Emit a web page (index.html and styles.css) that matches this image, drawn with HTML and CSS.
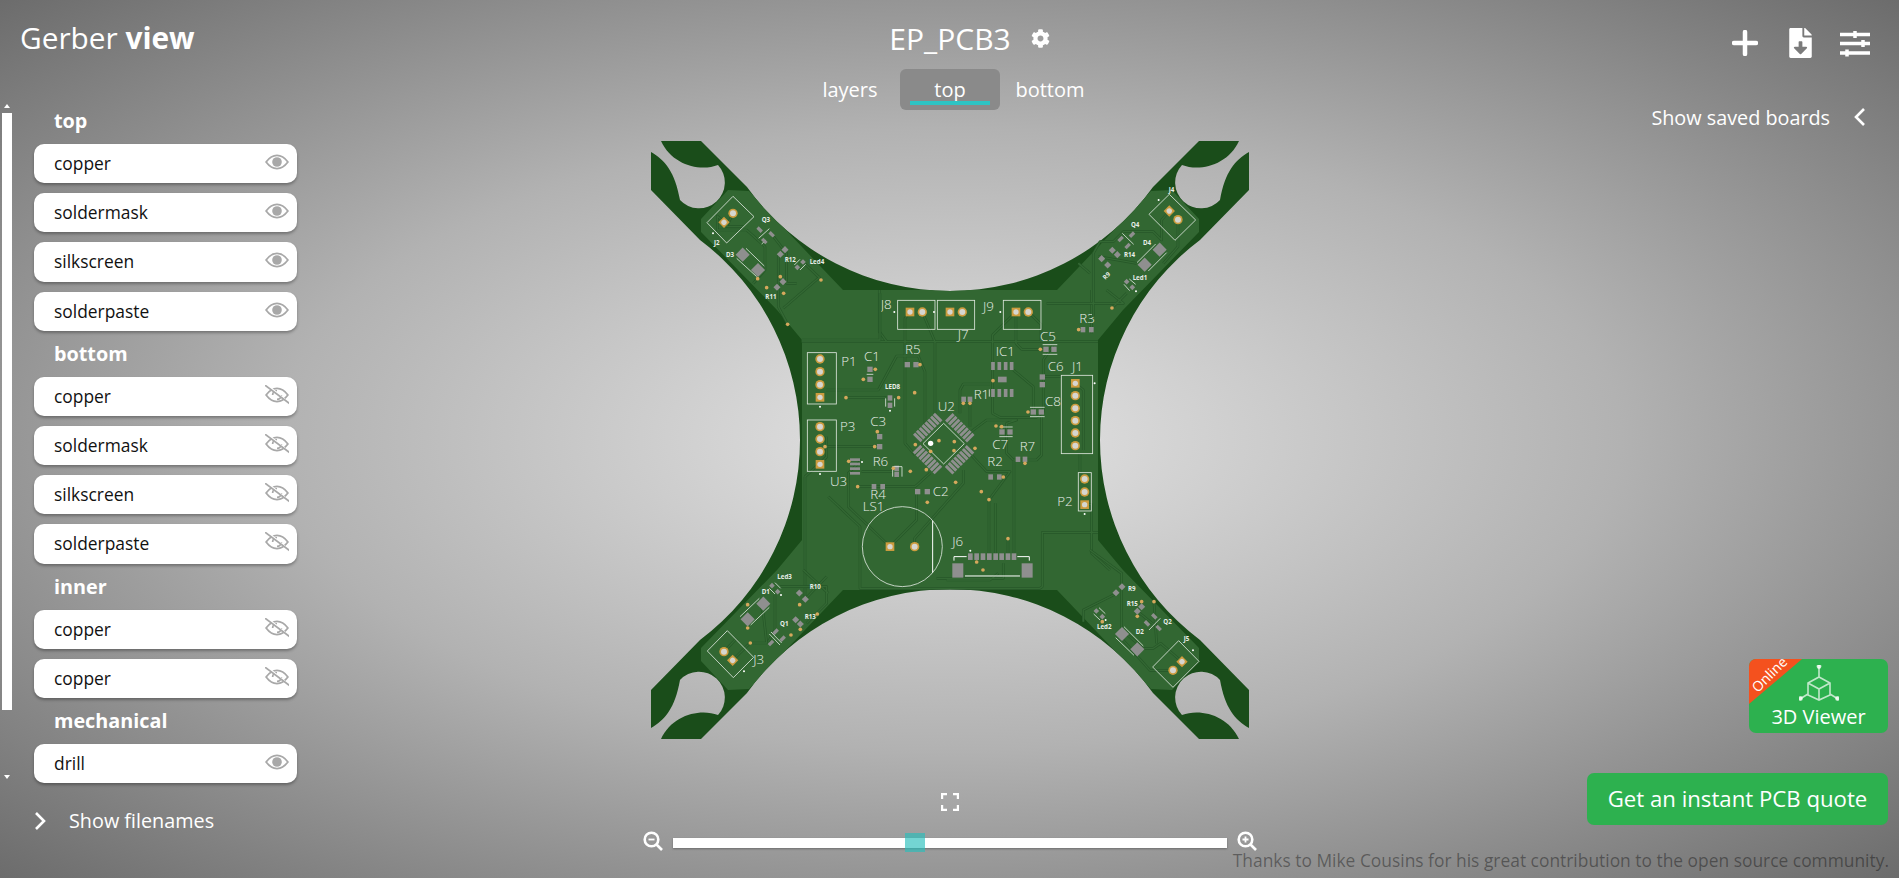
FILE: index.html
```html
<!DOCTYPE html>
<html lang="en">
<head>
    <meta charset="UTF-8">
    <meta name="viewport" content="width=device-width, initial-scale=1.0">
    <title>Gerber view</title>
    <link rel="stylesheet" href="styles.css">
</head>
<body>
    <div class="page">
        <aside class="sidebar">
            <div class="logo">Gerber <b>view</b></div>
            <div class="layer-scroll">
                <div class="scrollbar">
                    <span class="arrow-up"></span>
                    <span class="thumb"></span>
                    <span class="arrow-down"></span>
                </div>
                <div class="layer-list">
                    <h3>top</h3>
                    <div class="layer">copper <svg class="eye"><use href="#eye"/></svg></div>
                    <div class="layer">soldermask <svg class="eye"><use href="#eye"/></svg></div>
                    <div class="layer">silkscreen <svg class="eye"><use href="#eye"/></svg></div>
                    <div class="layer">solderpaste <svg class="eye"><use href="#eye"/></svg></div>
                    <h3>bottom</h3>
                    <div class="layer">copper <svg class="eye"><use href="#eye-off"/></svg></div>
                    <div class="layer">soldermask <svg class="eye"><use href="#eye-off"/></svg></div>
                    <div class="layer">silkscreen <svg class="eye"><use href="#eye-off"/></svg></div>
                    <div class="layer">solderpaste <svg class="eye"><use href="#eye-off"/></svg></div>
                    <h3>inner</h3>
                    <div class="layer">copper <svg class="eye"><use href="#eye-off"/></svg></div>
                    <div class="layer">copper <svg class="eye"><use href="#eye-off"/></svg></div>
                    <h3>mechanical</h3>
                    <div class="layer">drill <svg class="eye"><use href="#eye"/></svg></div>
                </div>
            </div>
            <div class="filenames">
                <svg class="chevron" viewBox="0 0 12 20"><path d="M2 2l8 8-8 8"/></svg>
                <span>Show filenames</span>
            </div>
        </aside>

        <main class="viewer">
            <div class="title-row">
                <span class="title">EP_PCB3</span>
                <svg class="gear" viewBox="0 0 512 512"><path d="M487.4 315.7l-42.6-24.6c4.3-23.2 4.3-47 0-70.2l42.6-24.6c4.9-2.8 7.1-8.6 5.5-14-11.1-35.6-30-67.8-54.7-94.6-3.8-4.1-10-5.1-14.8-2.3L380.8 110c-17.9-15.4-38.5-27.3-60.8-35.1V25.8c0-5.6-3.9-10.5-9.4-11.7-36.7-8.2-74.3-7.8-109.2 0-5.5 1.2-9.4 6.1-9.4 11.7V75c-22.2 7.9-42.8 19.8-60.8 35.1L88.7 85.5c-4.9-2.8-11-1.9-14.8 2.3-24.7 26.7-43.6 58.9-54.7 94.6-1.7 5.4.6 11.2 5.5 14L67.3 221c-4.3 23.2-4.3 47 0 70.2l-42.6 24.6c-4.9 2.8-7.1 8.6-5.5 14 11.1 35.6 30 67.8 54.7 94.6 3.8 4.1 10 5.1 14.8 2.3l42.6-24.6c17.9 15.4 38.5 27.3 60.8 35.1v49.2c0 5.6 3.9 10.5 9.4 11.7 36.7 8.2 74.3 7.8 109.2 0 5.5-1.2 9.4-6.1 9.4-11.7v-49.2c22.2-7.9 42.8-19.8 60.8-35.1l42.6 24.6c4.9 2.8 11 1.9 14.8-2.3 24.7-26.7 43.6-58.9 54.7-94.6 1.5-5.5-.7-11.3-5.6-14.1zM256 336c-44.1 0-80-35.9-80-80s35.9-80 80-80 80 35.9 80 80-35.9 80-80 80z"/></svg>
            </div>
            <div class="tabs">
                <div class="tab">layers</div>
                <div class="tab active">top</div>
                <div class="tab">bottom</div>
            </div>

            <svg class="board" viewBox="650 140 600 600">
                <defs>
                    <clipPath id="board-clip"><path d="M651,190 L651,152 C665,160 675,172 680,200 A25,25 0 1 0 718,165 C700,172 672,165 661,141 L701,141 L747,187 A250,250 0 0 0 1153,187 L1199,141 L1239,141 C1228,165 1200,172 1182,165 A25,25 0 1 0 1220,200 C1225,172 1235,160 1249,152 L1249,190 L1200,240 A250,250 0 0 0 1200,640 L1249,690 L1249,728 C1235,720 1225,708 1220,680 A25,25 0 1 0 1182,715 C1200,708 1228,715 1239,739 L1199,739 L1153,693 A250,250 0 0 0 747,693 L701,739 L661,739 C672,715 700,708 718,715 A25,25 0 1 0 680,680 C675,708 665,720 651,728 L651,690 L700,640 A250,250 0 0 0 700,240 Z"/></clipPath>
                    <g id="sq"><rect class="gold" x="-13" y="-13" width="26" height="26"/><circle class="hole" r="8"/></g>
                    <g id="sq45" transform="rotate(45)"><rect class="gold" x="-12" y="-12" width="24" height="24"/><circle class="hole" r="8"/></g>
                    <g id="th"><circle class="gold" r="14"/><circle class="hole" r="9"/></g>
                    <circle id="via" class="via" r="5.5"/>
                    <rect id="d12" class="smd" x="-6" y="-6" width="12" height="12" transform="rotate(45)"/>
                    <rect id="d15" class="smd" x="-7.5" y="-7.5" width="15" height="15" transform="rotate(45)"/>
                    <rect id="d30" class="smd" x="-15" y="-15" width="30" height="30" transform="rotate(45)"/>
                    <rect id="qp" class="smd" x="-9" y="-5" width="18" height="10" transform="rotate(45)"/>
                    <rect id="qn" class="smd" x="-9" y="-5" width="18" height="10" transform="rotate(-45)"/>
                    <rect id="p16" class="smd" x="-8" y="-8" width="16" height="16"/>
                    <rect id="p14" class="smd" x="-7" y="-8" width="14" height="16"/>
                    <rect id="pin" class="smd" x="-5.5" y="-12" width="11" height="24"/>
                    <g id="u2-row">
                        <rect class="smd" x="-46" y="-84" width="9" height="32"/>
                        <rect class="smd" x="-34" y="-84" width="9" height="32"/>
                        <rect class="smd" x="-22" y="-84" width="9" height="32"/>
                        <rect class="smd" x="-10" y="-84" width="9" height="32"/>
                        <rect class="smd" x="2" y="-84" width="9" height="32"/>
                        <rect class="smd" x="14" y="-84" width="9" height="32"/>
                        <rect class="smd" x="26" y="-84" width="9" height="32"/>
                        <rect class="smd" x="38" y="-84" width="9" height="32"/>
                    </g>
                    <g id="tracks-center">
                        <path d="M35,185 H924"/>
                        <path d="M360,96 L345,115 V490 L375,525"/>
                        <path d="M397,96 L435,185 V400"/>
                        <path d="M678,96 L608,165 V400 L630,412 H740 L760,395 V240 L790,195"/>
                        <path d="M678,96 V190 L695,208 H750"/>
                        <path d="M715,96 L753,133 V185"/>
                        <path d="M108,330 H265 L320,228 H385 L405,275 V440"/>
                        <path d="M168,353 H290"/>
                        <path d="M90,553 L110,530 V470 M105,500 H230 L255,500"/>
                        <path d="M215,575 H310 M203,620 H375 L420,580"/>
                        <path d="M300,800 L175,680 V580 L215,540"/>
                        <path d="M300,800 L380,720 V640"/>
                        <path d="M374,800 V775 L520,610 V570"/>
                        <path d="M597,660 V820 M597,660 L660,575 H590 L530,510"/>
                        <path d="M654,776 V820 M616,820 V670"/>
                        <path d="M672,820 V540 H740 L755,525 V410"/>
                        <path d="M670,540 L650,520 V430 L680,420 H590 L530,465"/>
                        <path d="M510,400 V330 L520,312 H600 M540,370 V440"/>
                        <path d="M856,310 L880,330 V510 M870,520 V580"/>
                        <path d="M884,674 H905 V820 L960,870"/>
                        <path d="M905,30 V160"/>
                        <path d="M45,590 V960 M45,590 L110,530"/>
                        <path d="M115,650 L210,740 V925 H750 L757,920 V757 H924"/>
                        <path d="M440,895 H640 V850 M470,900 H600 L625,880"/>
                        <path d="M757,290 H815 M730,390 V320 L670,270"/>
                        <path d="M268,30 V155 L290,185"/>
                    </g>
                    <g id="tracks-tl">
                        <path d="M252,277 L232,258 V300 H320 L375,350 V420 L340,460"/>
                        <path d="M279,250 L260,290 H310"/>
                        <path d="M395,313 L440,370 V460 H470"/>
                        <path d="M415,375 V530 L443,583"/>
                        <path d="M540,440 L430,535"/>
                        <path d="M489,396 L540,445"/>
                        <path d="M720,490 V630 H485"/>
                    </g>
                    <g id="tracks-bl">
                        <path d="M252,245 L290,205 M278,271 L330,219 H380 L370,130 L360,100"/>
                        <path d="M405,75 V180 L385,215"/>
                        <path d="M420,50 H470 L560,50 V100 L500,160"/>
                        <path d="M495,88 L560,20 M490,0 L565,70"/>
                    </g>
                    <g id="tracks-tr">
                        <path d="M658,243 L635,270 V330 L610,305 H520 L490,335 H450 L430,370 V560"/>
                        <path d="M684,269 V350 L640,400"/>
                        <path d="M445,380 L560,400 M470,480 L520,520 H290"/>
                        <path d="M385,400 L420,430 M486,534 L530,490"/>
                    </g>
                    <g id="tracks-br">
                        <path d="M696,335 L632,280 L610,295 H580 L515,240 V70 L420,0"/>
                        <path d="M669,361 H600 L510,260 M500,130 L400,180 V215"/>
                        <path d="M612,155 L620,280 M562,184 L625,235"/>
                    </g>
                </defs>

                <g clip-path="url(#board-clip)">
                    <rect class="base" x="650" y="140" width="600" height="600"/>
                    <path class="pour" d="M701,219 L728,190 L749,191 L822,268 L843,290 L1057,290 L1078,268 L1151,191 L1172,190 L1199,219 L1199,232 L1123,310 L1098,340 L1098,540 L1123,570 L1199,648 L1199,661 L1172,690 L1151,689 L1078,612 L1057,590 L843,590 L822,612 L749,689 L728,690 L701,661 L701,648 L777,570 L802,540 L802,340 L777,310 L701,232 Z"/>
                </g>

                <!-- centre of the board, in 3x units -->
                <g transform="translate(790 280) scale(.3333)">
                    <use class="tr-edge" href="#tracks-center"/>
                    <use class="tr-core" href="#tracks-center"/>

                    <rect class="silk" x="323" y="61" width="112" height="87"/>
                    <rect class="silk" x="442" y="61" width="112" height="87"/>
                    <rect class="silk" x="640" y="61" width="113" height="87"/>
                    <rect class="silk" x="52" y="218" width="87" height="154"/>
                    <rect class="silk" x="52" y="420" width="87" height="154"/>
                    <rect class="silk" x="814" y="286" width="94" height="235"/>
                    <rect class="silk" x="865" y="578" width="39" height="115"/>
                    <circle class="silk" cx="337" cy="800" r="120"/>
                    <path class="silk-b" d="M428,722 V878"/>

                    <use href="#sq" x="360" y="96"/><use href="#th" x="397" y="96"/>
                    <use href="#sq" x="480" y="96"/><use href="#th" x="517" y="96"/>
                    <use href="#sq" x="678" y="96"/><use href="#th" x="715" y="96"/>
                    <use href="#th" x="90" y="237"/><use href="#th" x="90" y="275"/><use href="#th" x="90" y="314"/><use href="#sq" x="90" y="352"/>
                    <use href="#th" x="90" y="440"/><use href="#th" x="90" y="477"/><use href="#th" x="90" y="515"/><use href="#sq" x="90" y="553"/>
                    <use href="#sq" x="856" y="310"/><use href="#th" x="856" y="347"/><use href="#th" x="856" y="385"/><use href="#th" x="856" y="422"/><use href="#th" x="856" y="459"/><use href="#th" x="856" y="497"/>
                    <use href="#th" x="884" y="597"/><use href="#th" x="884" y="636"/><use href="#sq" x="884" y="674"/>
                    <use href="#sq" x="300" y="800"/><use href="#th" x="374" y="800"/>

                    <!-- U2 -->
                    <g transform="translate(461 491) rotate(45)">
                        <use href="#u2-row"/>
                        <use href="#u2-row" transform="rotate(90)"/>
                        <use href="#u2-row" transform="rotate(180)"/>
                        <use href="#u2-row" transform="rotate(270)"/>
                    </g>
                    <path class="silk" d="M461,430 L523,491 L461,552 L399,491 Z"/>
                    <circle class="dot" cx="422" cy="490" r="8"/>

                    <!-- J6 -->
                    <rect class="smd" x="534" y="820" width="14" height="20"/><rect class="smd" x="553" y="820" width="14" height="20"/>
                    <rect class="smd" x="572" y="820" width="14" height="20"/><rect class="smd" x="591" y="820" width="14" height="20"/>
                    <rect class="smd" x="610" y="820" width="14" height="20"/><rect class="smd" x="628" y="820" width="14" height="20"/>
                    <rect class="smd" x="647" y="820" width="14" height="20"/><rect class="smd" x="665" y="820" width="14" height="20"/>
                    <rect class="smd" x="487" y="850" width="33" height="43"/><rect class="smd" x="695" y="850" width="33" height="43"/>
                    <path class="silk-b" d="M525,888 H690 M492,842 V830 H530 M682,830 H718 V842"/>

                    <!-- small parts -->
                    <use href="#p16" x="352" y="254"/><use href="#p16" x="378" y="254"/>
                    <use href="#p16" x="240" y="268"/><use href="#p16" x="240" y="298"/>
                    <use href="#p14" x="300" y="354"/><use href="#p14" x="300" y="376"/>
                    <path class="silk" d="M287,355 V380 M314,355 V380 M230,283 H250"/>
                    <use href="#p16" x="269" y="470"/><use href="#p16" x="269" y="500"/>
                    <use href="#p14" x="320" y="565"/><use href="#p14" x="320" y="583"/>
                    <path class="silk" d="M308,560 H336 V590 M308,590 V560"/>
                    <rect class="smd" x="180" y="535" width="30" height="8"/><rect class="smd" x="180" y="548" width="30" height="8"/>
                    <rect class="smd" x="180" y="562" width="30" height="8"/><rect class="smd" x="180" y="576" width="30" height="8"/>
                    <use href="#p14" x="252" y="620"/><use href="#p14" x="278" y="620"/>
                    <use href="#p16" x="383" y="635"/><use href="#p16" x="412" y="635"/>
                    <use href="#p14" x="521" y="358"/><use href="#p14" x="540" y="358"/>
                    <use href="#pin" x="609" y="258"/><use href="#pin" x="628" y="258"/><use href="#pin" x="647" y="258"/><use href="#pin" x="665" y="258"/>
                    <use href="#pin" x="609" y="339"/><use href="#pin" x="628" y="339"/><use href="#pin" x="647" y="339"/><use href="#pin" x="665" y="339"/>
                    <rect class="smd" x="624" y="290" width="26" height="17"/>
                    <use href="#p16" x="768" y="208"/><use href="#p16" x="792" y="208"/>
                    <path class="silk" d="M758,194 H802 M758,223 H802 M720,382 H764 M720,410 H764 M628,441 H668 M628,470 H668 M598,328 V350"/>
                    <use href="#p16" x="757" y="291"/><use href="#p16" x="757" y="314"/>
                    <use href="#p16" x="730" y="396"/><use href="#p16" x="754" y="396"/>
                    <use href="#p16" x="636" y="456"/><use href="#p16" x="660" y="456"/>
                    <use href="#p14" x="684" y="538"/><use href="#p14" x="705" y="538"/>
                    <use href="#p14" x="602" y="591"/><use href="#p14" x="628" y="591"/>
                    <use href="#p14" x="879" y="149"/><use href="#p14" x="904" y="149"/>

                    <use href="#via" x="390" y="254"/><use href="#via" x="256" y="268"/><use href="#via" x="220" y="298"/>
                    <use href="#via" x="326" y="353"/><use href="#via" x="168" y="353"/><use href="#via" x="262" y="455"/>
                    <use href="#via" x="254" y="500"/><use href="#via" x="105" y="500"/><use href="#via" x="310" y="565"/>
                    <use href="#via" x="361" y="574"/><use href="#via" x="409" y="569"/><use href="#via" x="176" y="544"/>
                    <use href="#via" x="203" y="620"/><use href="#via" x="412" y="667"/><use href="#via" x="520" y="370"/>
                    <use href="#via" x="540" y="370"/><use href="#via" x="609" y="302"/><use href="#via" x="751" y="208"/>
                    <use href="#via" x="714" y="396"/><use href="#via" x="618" y="438"/><use href="#via" x="635" y="440"/>
                    <use href="#via" x="705" y="550"/><use href="#via" x="640" y="591"/><use href="#via" x="866" y="149"/>
                    <use href="#via" x="374" y="338"/><use href="#via" x="376" y="494"/><use href="#via" x="447" y="482"/>
                    <use href="#via" x="493" y="485"/><use href="#via" x="422" y="514"/><use href="#via" x="492" y="512"/>
                    <use href="#via" x="555" y="505"/><use href="#via" x="497" y="607"/><use href="#via" x="574" y="635"/>
                    <use href="#via" x="597" y="659"/><use href="#via" x="654" y="776"/><use href="#via" x="560" y="846"/>
                    <use href="#via" x="579" y="870"/>

                    <circle class="dot" cx="313" cy="96" r="3"/><circle class="dot" cx="432" cy="96" r="3"/><circle class="dot" cx="631" cy="96" r="3"/>
                    <circle class="dot" cx="90" cy="380" r="3"/><circle class="dot" cx="90" cy="582" r="3"/><circle class="dot" cx="914" cy="310" r="3"/>
                    <circle class="dot" cx="884" cy="702" r="3"/><circle class="dot" cx="300" cy="392" r="3"/><circle class="dot" cx="216" cy="546" r="3"/>
                    <circle class="dot" cx="541" cy="812" r="3"/>

                    <text class="lbl" x="272" y="87">J8</text><text class="lbl" x="503" y="177">J7</text><text class="lbl" x="579" y="93">J9</text>
                    <text class="lbl" x="154" y="259">P1</text><text class="lbl" x="150" y="453">P3</text><text class="lbl" x="846" y="273">J1</text>
                    <text class="lbl" x="802" y="677">P2</text><text class="lbl" x="218" y="693">LS1</text><text class="lbl" x="487" y="798">J6</text>
                    <text class="lbl" x="345" y="221">R5</text><text class="lbl" x="222" y="243">C1</text><text class="lbl-s" x="285" y="327">LED8</text>
                    <text class="lbl" x="241" y="439">C3</text><text class="lbl" x="248" y="558">R6</text><text class="lbl" x="120" y="618">U3</text>
                    <text class="lbl" x="241" y="656">R4</text><text class="lbl" x="428" y="648">C2</text><text class="lbl" x="443" y="393">U2</text>
                    <text class="lbl" x="551" y="356">R1</text><text class="lbl" x="617" y="229">IC1</text><text class="lbl" x="750" y="182">C5</text>
                    <text class="lbl" x="773" y="273">C6</text><text class="lbl" x="765" y="379">C8</text><text class="lbl" x="607" y="506">C7</text>
                    <text class="lbl" x="689" y="513">R7</text><text class="lbl" x="592" y="558">R2</text><text class="lbl" x="868" y="129">R3</text>
                </g>

                <!-- top left arm -->
                <g transform="translate(640 130) scale(.3333)">
                    <use class="tr-edge" href="#tracks-tl"/>
                    <use class="tr-core" href="#tracks-tl"/>
                    <path class="silk" d="M279,199 L342,260 L260,339 L201,278 Z M356,325 L388,296 M365,342 L378,330 M290,385 L350,440 M318,355 L373,408 M463,405 L480,388 M480,420 L497,403"/>
                    <use href="#sq45" x="252" y="277"/><use href="#th" x="279" y="250"/>
                    <use href="#qp" x="359" y="299"/><use href="#qp" x="395" y="313"/><use href="#qp" x="373" y="333"/>
                    <use href="#d30" x="308" y="374"/><use href="#d30" x="354" y="420"/>
                    <use href="#d15" x="421" y="373"/><use href="#d15" x="435" y="359"/>
                    <use href="#d12" x="472" y="412"/><use href="#d12" x="489" y="396"/>
                    <use href="#d15" x="411" y="472"/><use href="#d15" x="429" y="455"/>
                    <use href="#via" x="421" y="440"/><use href="#via" x="380" y="473"/><use href="#via" x="431" y="490"/>
                    <use href="#via" x="353" y="446"/><use href="#via" x="443" y="583"/><use href="#via" x="543" y="450"/>
                    <circle class="dot" cx="219" cy="310" r="3"/>
                    <text class="lbl-s" x="222" y="344">J2</text><text class="lbl-s" x="365" y="275">Q3</text><text class="lbl-s" x="258" y="381">D3</text>
                    <text class="lbl-s" x="434" y="396">R12</text><text class="lbl-s" x="509" y="403">Led4</text><text class="lbl-s" x="376" y="508">R11</text>
                </g>

                <!-- bottom left arm -->
                <g transform="translate(640 570) scale(.3333)">
                    <use class="tr-edge" href="#tracks-bl"/>
                    <use class="tr-core" href="#tracks-bl"/>
                    <path class="silk" d="M262,182 L341,262 L280,323 L202,243 Z M300,140 L358,85 M332,165 L388,112 M388,55 L405,72 M405,38 L422,55 M388,192 L420,225 M393,186 L425,219"/>
                    <use href="#th" x="252" y="245"/><use href="#sq45" x="278" y="271"/>
                    <use href="#d30" x="370" y="101"/><use href="#d30" x="323" y="148"/>
                    <use href="#d12" x="396" y="47"/><use href="#d12" x="413" y="65"/>
                    <use href="#d15" x="478" y="69"/><use href="#d15" x="496" y="88"/>
                    <use href="#d15" x="467" y="149"/><use href="#d15" x="481" y="162"/>
                    <use href="#qn" x="407" y="185"/><use href="#qn" x="393" y="219"/><use href="#qn" x="428" y="206"/>
                    <use href="#via" x="323" y="104"/><use href="#via" x="323" y="174"/><use href="#via" x="479" y="104"/>
                    <use href="#via" x="532" y="132"/><use href="#via" x="481" y="178"/><use href="#via" x="453" y="195"/><use href="#via" x="331" y="219"/>
                    <circle class="dot" cx="312" cy="304" r="3"/><circle class="dot" cx="423" cy="75" r="3"/>
                    <text class="lbl" x="340" y="281">J3</text><text class="lbl-s" x="365" y="71">D1</text><text class="lbl-s" x="412" y="27">Led3</text>
                    <text class="lbl-s" x="509" y="56">R10</text><text class="lbl-s" x="494" y="146">R13</text><text class="lbl-s" x="420" y="168">Q1</text>
                </g>

                <!-- top right arm -->
                <g transform="translate(950 130) scale(.3333)">
                    <use class="tr-edge" href="#tracks-tr"/>
                    <use class="tr-core" href="#tracks-tr"/>
                    <path class="silk" d="M658,193 L737,270 L675,331 L597,253 Z M517,310 L551,343 M561,398 L617,342 M595,423 L650,368 M538,447 L557,463 M522,463 L539,482"/>
                    <use href="#sq45" x="658" y="243"/><use href="#th" x="684" y="269"/>
                    <use href="#qn" x="546" y="314"/><use href="#qn" x="512" y="327"/><use href="#qn" x="533" y="348"/>
                    <use href="#d30" x="629" y="359"/><use href="#d30" x="584" y="404"/>
                    <use href="#d15" x="487" y="361"/><use href="#d15" x="502" y="374"/>
                    <use href="#d15" x="455" y="386"/><use href="#d15" x="473" y="405"/>
                    <use href="#d12" x="530" y="455"/><use href="#d12" x="547" y="472"/>
                    <use href="#via" x="486" y="534"/>
                    <circle class="dot" cx="626" cy="210" r="3"/><circle class="dot" cx="558" cy="484" r="3"/>
                    <text class="lbl-s" x="656" y="185">J4</text><text class="lbl-s" x="543" y="290">Q4</text><text class="lbl-s" x="579" y="344">D4</text>
                    <text class="lbl-s" x="522" y="380">R14</text><text class="lbl-s" x="548" y="449">Led1</text>
                    <text class="lbl-s" transform="translate(466 450) rotate(-45)">R9</text>
                </g>

                <!-- bottom right arm -->
                <g transform="translate(950 550) scale(.3333)">
                    <use class="tr-edge" href="#tracks-br"/>
                    <use class="tr-core" href="#tracks-br"/>
                    <path class="silk" d="M686,272 L747,334 L669,412 L608,351 Z M597,240 L631,205 M497,263 L552,316 M522,230 L580,288 M431,192 L450,210 M447,173 L466,191"/>
                    <use href="#sq45" x="696" y="335"/><use href="#th" x="669" y="361"/>
                    <use href="#d15" x="516" y="110"/><use href="#d15" x="498" y="128"/>
                    <use href="#d15" x="562" y="184"/><use href="#d15" x="575" y="170"/>
                    <use href="#qp" x="613" y="199"/><use href="#qp" x="591" y="220"/><use href="#qp" x="626" y="234"/>
                    <use href="#d30" x="516" y="252"/><use href="#d30" x="562" y="298"/>
                    <use href="#d12" x="439" y="183"/><use href="#d12" x="457" y="200"/>
                    <use href="#via" x="575" y="155"/><use href="#via" x="562" y="199"/><use href="#via" x="612" y="155"/><use href="#via" x="457" y="215"/>
                    <circle class="dot" cx="729" cy="301" r="3"/><circle class="dot" cx="467" cy="210" r="3"/>
                    <text class="lbl-s" x="701" y="274">J5</text><text class="lbl-s" x="534" y="124">R9</text><text class="lbl-s" x="530" y="169">R15</text>
                    <text class="lbl-s" x="640" y="221">Q2</text><text class="lbl-s" x="557" y="251">D2</text><text class="lbl-s" x="441" y="237">Led2</text>
                </g>
            </svg>

            <svg class="fullscreen" viewBox="0 0 18 18"><path d="M1 6V1h5M12 1h5v5M17 12v5h-5M6 17H1v-5"/></svg>

            <div class="zoom-row">
                <svg class="zoom-icon" viewBox="0 0 20 20"><circle cx="8.5" cy="8.5" r="6.8"/><path d="M13.5 13.5l5.5 5.5"/><path class="thin" d="M5.5 8.5h6"/></svg>
                <div class="slider"><span class="handle"></span></div>
                <svg class="zoom-icon" viewBox="0 0 20 20"><circle cx="8.5" cy="8.5" r="6.8"/><path d="M13.5 13.5l5.5 5.5"/><path class="thin" d="M5.5 8.5h6M8.5 5.5v6"/></svg>
            </div>
        </main>

        <aside class="side-right">
            <div class="tools">
                <span class="tool tool-plus"><svg width="26" height="26" viewBox="0 0 26 26"><path class="plus" d="M13 2v22M2 13h22"/></svg></span>
                <span class="tool"><svg width="23" height="30" viewBox="0 0 384 512"><path fill="#fff" d="M224 136V0H24C10.7 0 0 10.7 0 24v464c0 13.3 10.7 24 24 24h336c13.3 0 24-10.7 24-24V160H248c-13.2 0-24-10.8-24-24zm76.45 211.36l-96.42 95.7c-6.65 6.61-17.39 6.61-24.04 0l-96.42-95.7C73.42 337.29 80.54 320 94.82 320H160v-80c0-8.84 7.16-16 16-16h32c8.84 0 16 7.16 16 16v80h65.18c14.28 0 21.4 17.29 11.27 27.36zM377 105L279.1 7c-4.5-4.5-10.6-7-17-7H256v128h128v-6.1c0-6.3-2.5-12.4-7-16.9z"/></svg></span>
                <span class="tool"><svg width="30" height="27" viewBox="0 0 30 27"><path class="bars" d="M0 4.5h30M0 13.5h30M0 23h30"/><path class="knobs" d="M15 1v7M23 10v7M7 19.5v7"/></svg></span>
            </div>
            <div class="saved">
                <span>Show saved boards</span>
                <svg class="chevron" viewBox="0 0 12 20"><path d="M10 2l-8 8 8 8"/></svg>
            </div>
            <div class="actions">
                <div class="viewer-btn">
                    <span class="ribbon"></span>
                    <span class="ribbon-text">Online</span>
                    <svg class="cube" viewBox="0 0 40 36"><path d="M20 0v12M20 12l11 6v12l-11 5-11-5V18zM9 18l11 6 11-6M20 24v11M9 29L1 34M31 29l8 5"/><circle cx="20" cy="1.5" r="1.6"/><circle cx="1.5" cy="33.5" r="1.6"/><circle cx="38.5" cy="33.5" r="1.6"/></svg>
                    <span>3D Viewer</span>
                </div>
                <div class="quote-btn">Get an instant PCB quote</div>
            </div>
        </aside>
    </div>

    <div class="credit">Thanks to Mike Cousins for his great contribution to the open source community.</div>

    <!-- shared eye icons -->
    <svg class="icon-defs">
        <symbol id="eye" viewBox="0 0 22 18">
            <path class="eye-line" d="M1 9C4 5 7 3 11 3s7 2 10 6c-3 4-6 6-10 6s-7-2-10-6z"/>
            <circle class="eye-iris" cx="11" cy="9" r="4.4"/>
        </symbol>
        <symbol id="eye-off" viewBox="0 0 22 18">
            <path class="eye-line" d="M1 9C4 5 7 3 11 3s7 2 10 6c-3 4-6 6-10 6s-7-2-10-6z"/>
            <path class="eye-line" d="M7 9a4 4 0 0 1 4-4M15 9a4 4 0 0 1-4 4"/>
            <path class="eye-white" d="M1 -1L23 17"/>
            <path class="eye-line" d="M0 0L24 18"/>
        </symbol>
    </svg>
</body>
</html>
```

FILE: styles.css
```css
html, body {
    height: 100%;
}

body {
    margin: 0;
    overflow: hidden;
    position: relative;
    font-family: 'Open Sans', sans-serif;
    color: #fff;
    background: radial-gradient(ellipse farthest-corner at center, #e4e4e4 0%, #b2b2b2 50%, #6c6c6c 100%);
}

.page {
    display: grid;
    grid-template-columns: 340px 1fr 340px;
    height: 100%;
}

/* left column */
.logo {
    height: 103px;
    padding: 16px 0 0 20px;
    box-sizing: border-box;
    font-size: 29.8px;
    line-height: 44px;
}

.layer-scroll {
    display: flex;
}

.scrollbar {
    width: 10px;
    margin-left: 2px;
    display: flex;
    flex-direction: column;
    align-items: center;
}

.arrow-up, .arrow-down {
    width: 0;
    height: 0;
    border-left: 3px solid transparent;
    border-right: 3px solid transparent;
}

.arrow-up {
    margin-top: 1px;
    border-bottom: 4px solid #fff;
}

.arrow-down {
    margin-top: 65px;
    border-top: 4px solid #fff;
}

.thumb {
    width: 10px;
    height: 597px;
    margin-top: 5px;
    background: #fff;
}

.layer-list {
    width: 263px;
    margin-left: 22px;
    padding-top: 5px;
}

.layer-list h3 {
    margin: 0;
    height: 36px;
    padding-left: 20px;
    font-size: 19.8px;
    font-weight: 700;
    line-height: 26px;
}

.layer {
    height: 39.2px;
    margin-bottom: 10px;
    padding: 0 8px 1px 20px;
    box-sizing: border-box;
    display: flex;
    align-items: center;
    justify-content: space-between;
    background: #fff;
    border-radius: 10px;
    color: #111;
    font-size: 17.4px;
    box-shadow: 0 2px 3px rgba(0, 0, 0, 0.3);
}

.layer-list .layer:last-child {
    margin-bottom: 0;
}

.eye {
    width: 24px;
    height: 20px;
    margin-top: -2px;
}

.eye-line {
    fill: none;
    stroke: #a8a8a8;
    stroke-width: 1.6;
}

.eye-iris {
    fill: #a8a8a8;
}

.eye-white {
    fill: none;
    stroke: #fff;
    stroke-width: 1.6;
}

.icon-defs {
    display: none;
}

.filenames {
    display: flex;
    align-items: center;
    gap: 23px;
    margin: 24px 0 0 34px;
    font-size: 19.8px;
    line-height: 28px;
}

.chevron {
    width: 12px;
    height: 20px;
    fill: none;
    stroke: #fff;
    stroke-width: 2.6;
}

/* middle column */
.viewer {
    display: flex;
    flex-direction: column;
    align-items: center;
}

.title-row {
    height: 69px;
    padding: 8px 0 0 40px;
    box-sizing: border-box;
    display: flex;
    align-items: center;
    gap: 20px;
}

.title {
    font-size: 30px;
}

.gear {
    width: 19px;
    height: 19px;
    fill: #fff;
}

.tabs {
    display: flex;
}

.tab {
    position: relative;
    width: 100px;
    height: 41px;
    font-size: 20px;
    line-height: 41px;
    text-align: center;
    text-indent: 1px;
}

.tab.active {
    background: #8a8a8a;
    border-radius: 6px;
}

.tab.active::after {
    content: "";
    position: absolute;
    left: 10px;
    right: 10px;
    bottom: 5px;
    height: 4px;
    background: #2ec4c4;
}

.board {
    width: 600px;
    height: 600px;
    margin-top: 30px;
}

.base {
    fill: #1a4d1a;
}

.pour {
    fill: #326732;
}

.tr-edge, .tr-core {
    fill: none;
    stroke-linejoin: round;
}

.tr-edge {
    stroke: #265728;
    stroke-width: 8;
}

.tr-core {
    stroke: #346934;
    stroke-width: 4;
}

.silk {
    fill: none;
    stroke: #dfe7de;
    stroke-width: 2.5;
}

.silk-b {
    fill: none;
    stroke: #fff;
    stroke-width: 3;
}

.smd {
    fill: #8f8f8f;
}

.gold {
    fill: #cc9c3f;
}

.hole {
    fill: #d6d6d0;
}

.via {
    fill: #d6a85c;
}

.dot {
    fill: #fff;
}

.lbl, .lbl-s {
    fill: #e9eee8;
}

.lbl {
    font-size: 40px;
    font-weight: 300;
}

.lbl-s {
    font-size: 18.5px;
    font-weight: 700;
}

.fullscreen {
    width: 18px;
    height: 18px;
    margin-top: 53px;
    fill: none;
    stroke: #fff;
    stroke-width: 2.4;
}

.zoom-row {
    display: flex;
    align-items: center;
    gap: 10px;
    height: 24px;
    margin-top: 20px;
}

.zoom-icon {
    width: 20px;
    height: 20px;
    margin-top: -4px;
    fill: none;
    stroke: #fff;
    stroke-width: 2.6;
}

.zoom-icon .thin {
    stroke-width: 1.8;
}

.slider {
    position: relative;
    width: 554px;
    height: 10px;
    background: #fff;
    box-shadow: 0 1px 2px rgba(0, 0, 0, 0.3);
}

.handle {
    position: absolute;
    left: 232px;
    top: -5px;
    width: 20px;
    height: 19px;
    background: rgba(40, 190, 188, 0.65);
}

/* right column */
.side-right {
    display: flex;
    flex-direction: column;
    align-items: flex-end;
}

.tools {
    display: flex;
    gap: 28px;
    height: 86px;
    padding-right: 29px;
    align-items: center;
}

.tool {
    display: flex;
}

.tool-plus {
    margin-right: 3px;
}

.plus {
    fill: none;
    stroke: #fff;
    stroke-width: 4.5;
    stroke-linecap: round;
}

.bars, .knobs {
    fill: none;
    stroke: #fff;
    stroke-width: 3.5;
}

.saved {
    display: flex;
    align-items: center;
    gap: 24px;
    height: 62px;
    padding-right: 33px;
    font-size: 19.8px;
}

.actions {
    margin-top: auto;
    padding: 0 11px 53px 0;
    display: flex;
    flex-direction: column;
    align-items: flex-end;
    gap: 40px;
}

.viewer-btn {
    position: relative;
    width: 139px;
    height: 74px;
    padding-top: 6px;
    box-sizing: border-box;
    display: flex;
    flex-direction: column;
    align-items: center;
    background: #2db14f;
    border-radius: 7px;
    font-size: 20px;
    line-height: 26px;
}

.ribbon {
    position: absolute;
    left: 0;
    top: 0;
    width: 53px;
    height: 45px;
    background: #f4511e;
    border-top-left-radius: 7px;
    clip-path: polygon(0 0, 100% 0, 0 100%);
}

.ribbon-text {
    position: absolute;
    left: 0;
    top: 8px;
    width: 36px;
    font-size: 14px;
    line-height: 20px;
    text-align: center;
    transform: rotate(-45deg);
}

.cube {
    width: 40px;
    height: 36px;
    margin-bottom: 3px;
    fill: rgba(255, 255, 255, 0.7);
    stroke: rgba(255, 255, 255, 0.7);
    stroke-width: 1.6;
}

.cube path {
    fill: none;
}

.quote-btn {
    width: 301px;
    height: 52px;
    background: #2db14f;
    border-radius: 7px;
    font-size: 22.2px;
    line-height: 52px;
    text-align: center;
}

.credit {
    position: absolute;
    right: 10px;
    bottom: 6px;
    font-size: 17.4px;
    line-height: 24px;
    color: rgba(0, 0, 0, 0.38);
}
```
